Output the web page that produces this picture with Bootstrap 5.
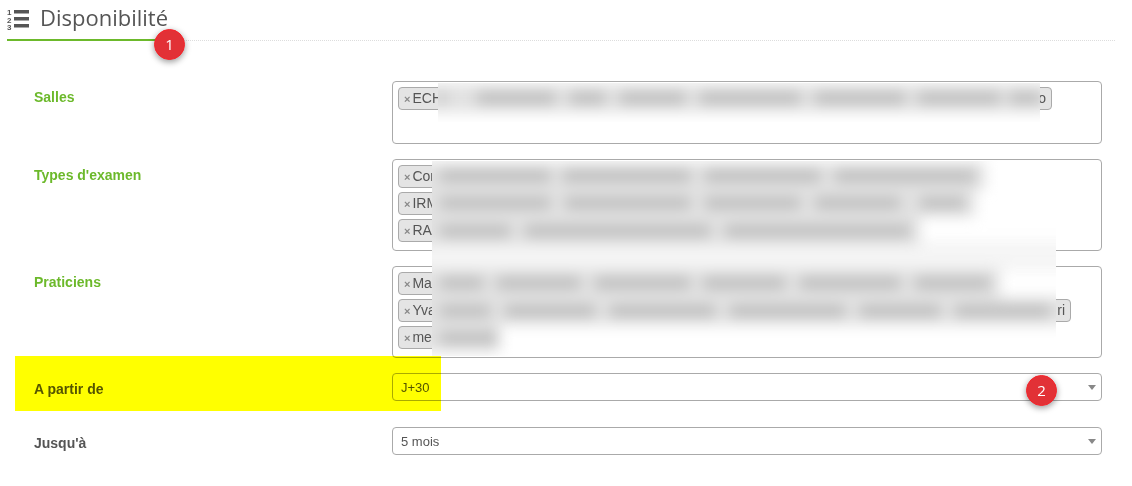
<!DOCTYPE html>
<html lang="fr">
<head>
  <meta charset="UTF-8" />
  <title>Disponibilité</title>
  <link href="https://cdn.jsdelivr.net/npm/bootstrap@5.3.0/dist/css/bootstrap.min.css" rel="stylesheet">
  <style>
    body { background: #fff; color: #555; font-family: "Liberation Sans", Arial, sans-serif; font-size: 14px; }
    .sheet { position: relative; width: 1132px; height: 486px; overflow: hidden; }

    .head-zone { margin: 0 17px 0 7px; height: 41px; border-bottom: 1px dotted #ddd; position: relative; padding-top: 1px; }
    .head-zone::after { content: ""; position: absolute; left: 0; bottom: -1px; width: 150px; height: 2px; background: #6cb92b; }
    .head-title { font-family: "Open Sans", sans-serif; font-size: 22px; font-weight: 400; color: #555; margin: 0; line-height: 32px; }
    .head-icon { width: 23px; height: 24px; margin: 6px 10px 0 0; }

    .form-zone { margin-top: 40px; padding-left: 34px; width: 1102px; }
    .field-row { margin-bottom: 15px; }
    .field-row.wide-gap { margin-bottom: 26px; }
    .field-label { flex: 0 0 358px; font-weight: 700; font-size: 14px; color: #555; padding-top: 6px; margin: 0; }
    .field-label.green { color: #6cb92b; }
    .tag-box { flex: 1 1 auto; border: 1px solid #aaa; border-radius: 4px; padding: 5px 5px 0; background: #fff; }
    .tag-box.h-s { height: 63px; }
    .tag-box.h-l { height: 92px; }
    .tag-pill { display: flex; justify-content: space-between; align-items: center; width: 100px; height: 23px; margin-bottom: 4px; padding: 0 5px 1px 5px;
      background: #e4e4e4; border: 1px solid #aaa; border-radius: 4px; font-size: 14px; color: #555; line-height: 1; }
    .tag-pill b { color: #888; font-size: 11px; margin-right: 2px; }
    .tag-pill.w-salle { width: 654px; }
    .tag-pill.w-prat { width: 673px; }
    .pick { flex: 1 1 auto; height: 28px; min-height: 0; padding: 2px 24px 0 8px; font-size: 13px; color: #555; border: 1px solid #aaa; border-radius: 4px;
      background-size: 8px 5px; background-position: right 5px center;
      background-image: url("data:image/svg+xml,%3csvg xmlns='http://www.w3.org/2000/svg' viewBox='0 0 8 5'%3e%3cpath fill='%23888' d='M0 0h8L4 5z'/%3e%3c/svg%3e"); }

    /* blurred out zones of the screenshot */
    .blur-zone { position: absolute; overflow: hidden; background: #fff; }
    .blur-a { left: 438px; top: 83px; width: 602px; height: 39px; }
    .blur-b { left: 432px; top: 161px; width: 624px; height: 195px; }
    .blur-in { position: absolute; inset: 0; filter: blur(7px); }
    .blur-band { position: absolute; background: #e2e2e2; }
    .blur-gap { position: absolute; left: -20px; top: 80px; width: 660px; height: 30px; background: #f5f5f5; }
    .blur-bar { position: absolute; background: #bdbdbd; height: 12px; }

    .hilite { position: absolute; left: 15px; top: 356px; width: 426px; height: 55px; background: #ff0; mix-blend-mode: multiply; }
    .pin { position: absolute; width: 31px; height: 31px; border-radius: 50%; background: #e23136; border: 1px solid #f8232a;
      box-shadow: 0 2px 6px rgba(0,0,0,.4); color: #fff; font-family: "Open Sans", sans-serif; font-size: 15px; line-height: 29px; text-align: center; }
    .pin-1 { left: 154px; top: 29px; }
    .pin-2 { left: 1026px; top: 375px; }
  </style>
</head>
<body>
  <div class="sheet">
    <div class="head-zone d-flex align-items-start">
      <svg class="head-icon" viewBox="0 0 23 24">
        <g font-family="Liberation Sans" font-size="8" font-weight="700" fill="#555">
          <text x="0" y="8">1</text>
          <text x="0" y="15.5">2</text>
          <text x="0" y="23">3</text>
        </g>
        <path fill="#555" d="M7 3h15v3.5H7zM7 10h15v3.5H7zM7 17h15v3.5H7z"/>
      </svg>
      <h1 class="head-title">Disponibilité</h1>
    </div>

    <form class="form-zone">
      <div class="field-row d-flex">
        <label class="field-label green">Salles</label>
        <div class="tag-box h-s">
          <span class="tag-pill w-salle"><span><b>×</b>ECH</span><span>o</span></span>
        </div>
      </div>
      <div class="field-row d-flex">
        <label class="field-label green">Types d'examen</label>
        <div class="tag-box h-l">
          <span class="tag-pill"><span><b>×</b>Con</span></span>
          <span class="tag-pill"><span><b>×</b>IRM</span></span>
          <span class="tag-pill"><span><b>×</b>RAD</span></span>
        </div>
      </div>
      <div class="field-row d-flex">
        <label class="field-label green">Praticiens</label>
        <div class="tag-box h-l">
          <span class="tag-pill"><span><b>×</b>Max</span></span>
          <span class="tag-pill w-prat"><span><b>×</b>Yva</span><span>ri</span></span>
          <span class="tag-pill"><span><b>×</b>med</span></span>
        </div>
      </div>
      <div class="field-row wide-gap d-flex">
        <label class="field-label">A partir de</label>
        <select class="form-select pick"><option>J+30</option></select>
      </div>
      <div class="field-row d-flex">
        <label class="field-label">Jusqu'à</label>
        <select class="form-select pick"><option>5 mois</option></select>
      </div>
    </form>

    <div class="blur-zone blur-a"><div class="blur-in" id="blurA"></div></div>
    <div class="blur-zone blur-b"><div class="blur-in" id="blurB"><div class="blur-gap"></div></div></div>

    <div class="hilite"></div>
    <div class="pin pin-1">1</div>
    <div class="pin pin-2">2</div>
  </div>

  <script>
    // [y, band from, band to, [[bar x, bar w], ...]] with page coordinates
    const zones = [
      { id: 'blurA', x: 438, y: 83, rows: [
        [98, 420, 1052, [[438, 7], [477, 78], [570, 35], [620, 65], [700, 100], [815, 90], [918, 82], [1010, 30]]]
      ]},
      { id: 'blurB', x: 432, y: 161, rows: [
        [176, 420, 985, [[440, 110], [563, 127], [705, 115], [835, 140]]],
        [203, 420, 975, [[440, 110], [565, 125], [705, 95], [815, 85], [920, 45]]],
        [231, 420, 920, [[440, 70], [525, 185], [725, 185]]],
        [283, 420, 1000, [[440, 43], [497, 83], [595, 95], [703, 82], [800, 100], [915, 75]]],
        [311, 420, 1070, [[440, 50], [505, 90], [610, 105], [730, 115], [860, 80], [955, 95]]],
        [338, 420, 500, [[440, 57]]]
      ]}
    ];
    zones.forEach(z => {
      const host = document.getElementById(z.id);
      z.rows.forEach(([y, from, to, bars]) => {
        const band = document.createElement('div');
        band.className = 'blur-band';
        band.style.cssText = `left:${from - z.x}px;top:${y - z.y - 14}px;width:${to - from}px;height:28px`;
        host.appendChild(band);
        bars.forEach(([x, w]) => {
          const bar = document.createElement('div');
          bar.className = 'blur-bar';
          bar.style.cssText = `left:${x - z.x}px;top:${y - z.y - 6}px;width:${w}px`;
          host.appendChild(bar);
        });
      });
    });
  </script>
  <script src="https://cdn.jsdelivr.net/npm/bootstrap@5.3.0/dist/js/bootstrap.bundle.min.js"></script>
</body>
</html>
